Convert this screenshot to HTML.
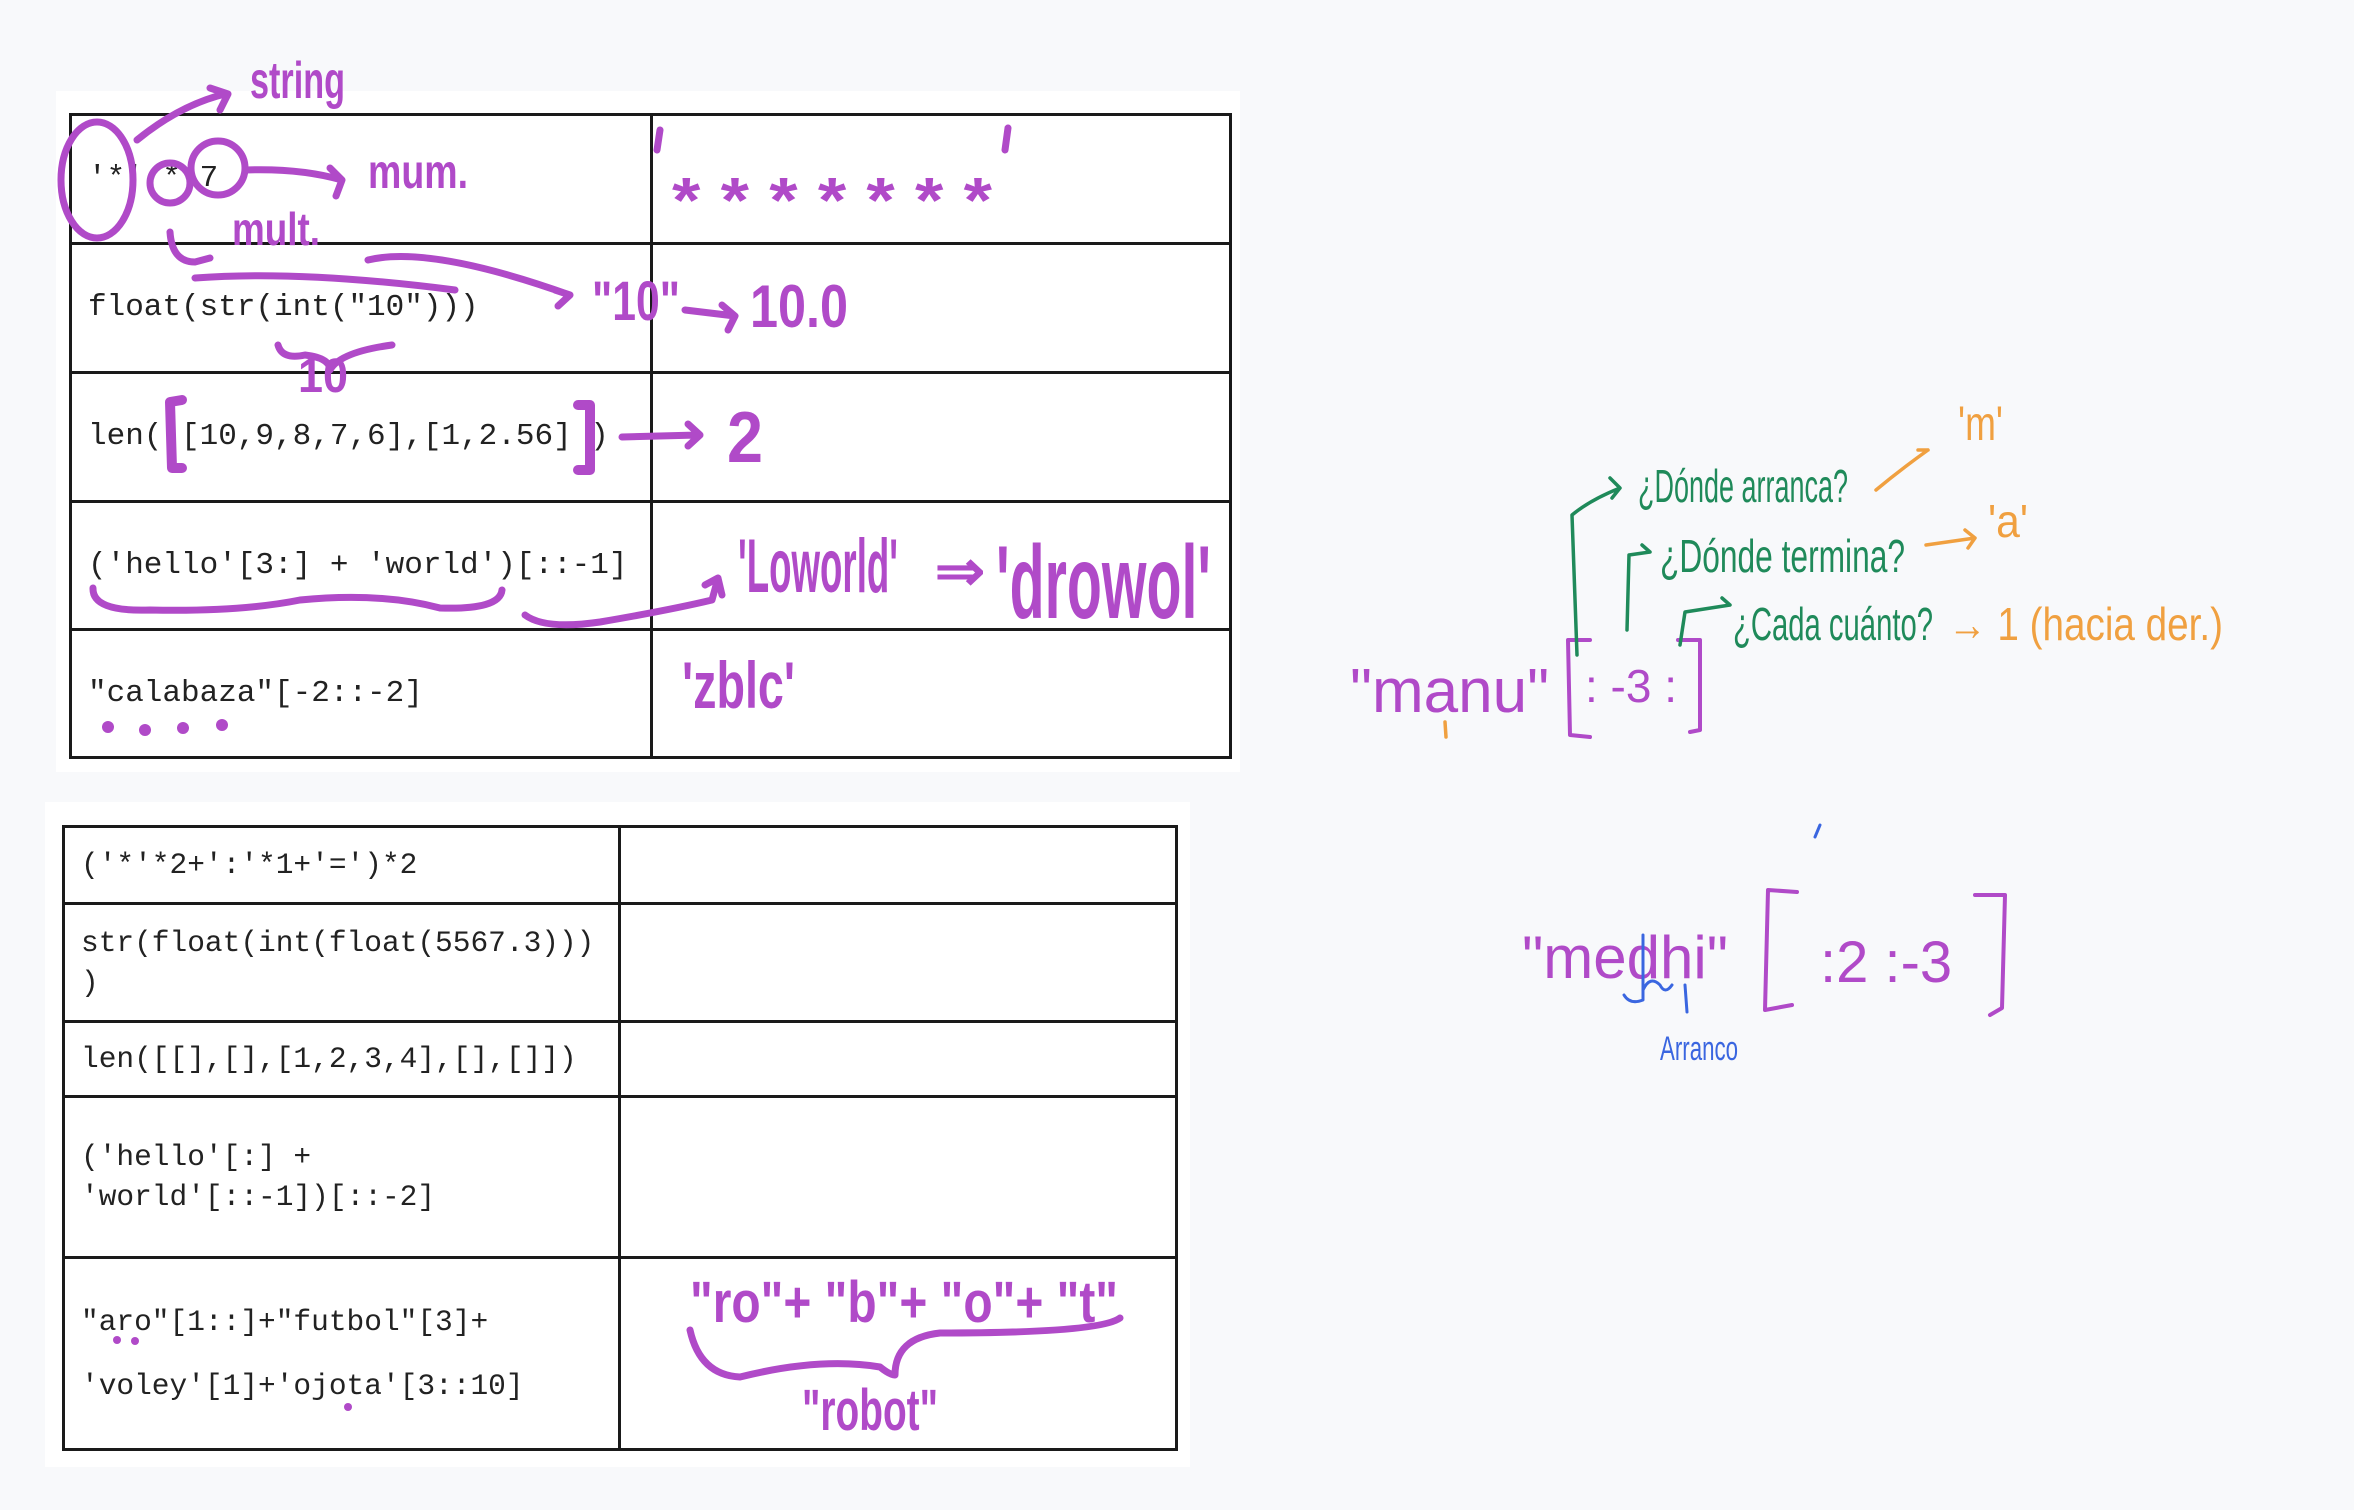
<!DOCTYPE html>
<html><head><meta charset="utf-8"><style>
html,body{margin:0;padding:0}
body{width:2354px;height:1510px;background:#f8f9fb;position:relative;overflow:hidden;font-family:"Liberation Mono",monospace;color:#222}
.card{position:absolute;background:#fff}
table{position:absolute;border-collapse:collapse}
td{border:3px solid #1a1a1a;padding:0 0 0 16px;vertical-align:middle;font-size:31px;line-height:40px;white-space:pre}
svg{position:absolute;left:0;top:0}
.h{font-family:"Liberation Sans",sans-serif;font-weight:bold;fill:#b04ac8}
</style></head><body>
<div class="card" style="left:56px;top:91px;width:1184px;height:681px"></div>
<table style="left:69px;top:113px;width:1163px">
<col style="width:581px"><col>
<tr style="height:129px"><td>'*' * 7</td><td></td></tr>
<tr style="height:129px"><td>float(str(int("10")))</td><td></td></tr>
<tr style="height:129px"><td>len( [10,9,8,7,6],[1,2.56] )</td><td></td></tr>
<tr style="height:128px"><td>('hello'[3:] + 'world')[::-1]</td><td></td></tr>
<tr style="height:128px"><td>"calabaza"[-2::-2]</td><td></td></tr>
</table>
<div class="card" style="left:45px;top:802px;width:1145px;height:665px"></div>
<table style="left:62px;top:825px;width:1116px">
<col style="width:556px"><col>
<tr style="height:77px"><td style="font-size:29.5px">('*'*2+':'*1+'=')*2</td><td></td></tr>
<tr style="height:118px"><td style="font-size:29.5px">str(float(int(float(5567.3)))
)</td><td></td></tr>
<tr style="height:75px"><td style="font-size:29.5px">len([[],[],[1,2,3,4],[],[]])</td><td></td></tr>
<tr style="height:161px"><td style="font-size:29.5px">('hello'[:] +
'world'[::-1])[::-2]</td><td></td></tr>
<tr style="height:192px"><td style="font-size:29.5px;line-height:64px">"aro"[1::]+"futbol"[3]+
'voley'[1]+'ojota'[3::10]</td><td></td></tr>
</table>
<svg width="2354" height="1510" viewBox="0 0 2354 1510" fill="none" stroke-linecap="round" stroke-linejoin="round">
<g stroke="#b04ac8" stroke-width="7">
<ellipse cx="97" cy="180" rx="36" ry="58"/>
<circle cx="170" cy="183" r="20"/>
<circle cx="218" cy="168" r="27"/>
<path d="M137 140 Q180 105 225 94 M210 88 L228 94 L220 110"/>
<path d="M245 170 Q300 168 342 180 M330 168 L342 180 L336 196"/>
<path d="M170 232 Q172 262 195 262 L210 258"/>
<path d="M195 278 Q300 270 455 290"/>
<path d="M368 260 Q430 245 570 295 M555 290 L570 295 L558 306"/>
<path d="M278 345 Q282 360 305 355 Q330 358 330 370 Q340 352 392 345"/>
<path d="M685 310 L735 316 M722 305 L735 316 L728 330"/>
<path d="M182 400 L170 402 L172 468 L182 468" stroke-width="10"/>
<path d="M578 405 L590 405 L590 470 L578 470" stroke-width="10"/>
<path d="M622 437 L698 435 M688 424 L700 435 L688 446"/>
<path d="M93 588 Q92 612 150 610 Q240 612 300 600 Q380 592 440 608 Q500 610 502 590"/>
<path d="M525 615 Q545 630 600 622 Q670 610 712 600 L718 578 M705 585 L718 578 L722 595"/>
<path d="M690 1330 Q700 1375 740 1377 Q820 1357 880 1367 Q890 1375 895 1375 Q895 1338 940 1333 Q1100 1333 1120 1318"/>
<path d="M660 130 L657 150 M1008 128 L1005 150"/>
</g>
<g fill="#b04ac8">
<circle cx="108" cy="727" r="6"/><circle cx="145" cy="730" r="6"/><circle cx="183" cy="728" r="6"/><circle cx="222" cy="725" r="6"/>
<circle cx="117" cy="1340" r="4"/><circle cx="135" cy="1341" r="4"/><circle cx="348" cy="1407" r="4"/>
</g>
<text class="h" x="250" y="98" font-size="52" textLength="95" lengthAdjust="spacingAndGlyphs">string</text>
<text class="h" x="368" y="188" font-size="48" textLength="100" lengthAdjust="spacingAndGlyphs">mum.</text>
<text class="h" x="232" y="245" font-size="46" textLength="88" lengthAdjust="spacingAndGlyphs">mult.</text>
<text class="h" x="672" y="222" font-size="64" textLength="320" lengthAdjust="spacingAndGlyphs">* * * * * * *</text>
<text class="h" x="592" y="320" font-size="56" textLength="88" lengthAdjust="spacingAndGlyphs">"10"</text>
<text class="h" x="750" y="327" font-size="60" textLength="98" lengthAdjust="spacingAndGlyphs">10.0</text>
<text class="h" x="298" y="392" font-size="48" textLength="50" lengthAdjust="spacingAndGlyphs">10</text>
<text class="h" x="727" y="462" font-size="72" textLength="36" lengthAdjust="spacingAndGlyphs">2</text>
<text class="h" x="738" y="592" font-size="76" textLength="160" lengthAdjust="spacingAndGlyphs">'Loworld'</text>
<text class="h" x="935" y="590" font-size="56" textLength="50" lengthAdjust="spacingAndGlyphs">⇒</text>
<text class="h" x="996" y="618" font-size="104" textLength="215" lengthAdjust="spacingAndGlyphs">'drowol'</text>
<text class="h" x="682" y="708" font-size="66" textLength="113" lengthAdjust="spacingAndGlyphs">'zblc'</text>
<text class="h" x="690" y="1322" font-size="58" textLength="428" lengthAdjust="spacingAndGlyphs">"ro"+ "b"+ "o"+ "t"</text>
<text class="h" x="802" y="1430" font-size="58" textLength="136" lengthAdjust="spacingAndGlyphs">"robot"</text>
<g font-family="Liberation Sans,sans-serif">
<text x="1350" y="712" font-size="62" fill="#b04ac8">"manu"</text>
<g stroke="#b04ac8" stroke-width="4"><path d="M1590 640 L1568 640 L1570 735 L1590 737 M1678 640 L1700 640 L1700 730 L1690 732"/></g>
<text x="1585" y="702" font-size="46" fill="#b04ac8">: -3 :</text>
<g stroke="#1f8a5a" stroke-width="3.5"><path d="M1577 655 L1572 515 Q1590 500 1620 488 M1610 478 L1620 488 L1612 498"/><path d="M1627 630 L1629 555 L1650 552 M1642 545 L1650 552"/><path d="M1680 645 L1685 612 L1730 605 M1722 598 L1730 605"/></g>
<text x="1638" y="502" font-size="46" fill="#1f8a5a" textLength="210" lengthAdjust="spacingAndGlyphs">¿Dónde arranca?</text>
<text x="1660" y="572" font-size="46" fill="#1f8a5a" textLength="245" lengthAdjust="spacingAndGlyphs">¿Dónde termina?</text>
<text x="1733" y="640" font-size="46" fill="#1f8a5a" textLength="200" lengthAdjust="spacingAndGlyphs">¿Cada cuánto?</text>
<g stroke="#f0a040" stroke-width="3.5"><path d="M1876 490 Q1900 470 1928 450 M1918 450 L1928 450"/><path d="M1926 545 L1975 538 M1965 530 L1975 538 L1968 548"/><path d="M1445 722 L1446 737"/></g>
<text x="1958" y="440" font-size="48" fill="#f0a040" textLength="45" lengthAdjust="spacingAndGlyphs">'m'</text>
<text x="1988" y="537" font-size="46" fill="#f0a040" textLength="40" lengthAdjust="spacingAndGlyphs">'a'</text>
<text x="1948" y="640" font-size="46" fill="#f0a040" textLength="275" lengthAdjust="spacingAndGlyphs">→ 1  (hacia der.)</text>
<text x="1522" y="978" font-size="60" fill="#b04ac8">"medhi"</text>
<g stroke="#b04ac8" stroke-width="4"><path d="M1797 892 L1768 890 L1765 1010 L1792 1005 M1975 895 L2005 895 L2002 1008 L1990 1015"/></g>
<text x="1820" y="982" font-size="58" fill="#b04ac8">:2 :-3</text>
<g stroke="#3a66e0" stroke-width="3"><path d="M1643 935 L1643 1000 Q1630 1005 1624 995 M1643 990 Q1650 975 1660 985 Q1665 995 1672 985 M1685 985 L1687 1012 M1815 837 L1820 825"/></g>
<text x="1660" y="1060" font-size="34" fill="#3a66e0" textLength="78" lengthAdjust="spacingAndGlyphs">Arranco</text>
</g>
</svg>
</body></html>
